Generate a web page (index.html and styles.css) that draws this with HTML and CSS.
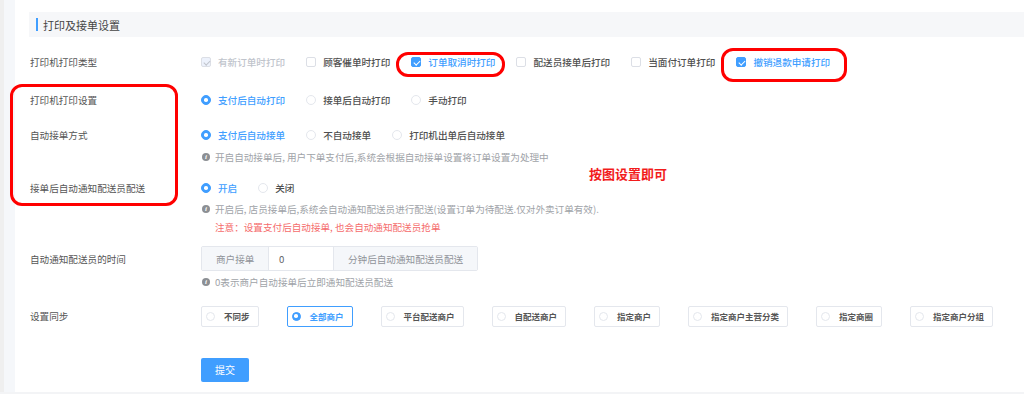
FILE: index.html
```html
<!DOCTYPE html>
<html lang="zh-CN">
<head>
<meta charset="utf-8">
<title>打印及接单设置</title>
<link rel="stylesheet" href="styles.css">
</head>
<body>
<div class="page">
  <div class="strip"></div>
  <div class="panel">
    <div class="section-title"><span class="bar"></span><span>打印及接单设置</span></div>
    <div class="form">
      <div class="row r1">
        <div class="label">打印机打印类型</div>
        <div class="ctrl">
          <span class="opt disabled"><span class="cb checked"></span>有新订单时打印</span>
          <span class="opt"><span class="cb"></span>顾客催单时打印</span>
          <span class="opt on"><span class="cb checked"></span>订单取消时打印</span>
          <span class="opt"><span class="cb"></span>配送员接单后打印</span>
          <span class="opt"><span class="cb"></span>当面付订单打印</span>
          <span class="opt on"><span class="cb checked"></span>撤销退款申请打印</span>
        </div>
      </div>
      <div class="row r2">
        <div class="label">打印机打印设置</div>
        <div class="ctrl">
          <span class="opt on"><span class="rd checked"></span>支付后自动打印</span>
          <span class="opt"><span class="rd"></span>接单后自动打印</span>
          <span class="opt"><span class="rd"></span>手动打印</span>
        </div>
      </div>
      <div class="row r3">
        <div class="label">自动接单方式</div>
        <div class="ctrl">
          <span class="opt on"><span class="rd checked"></span>支付后自动接单</span>
          <span class="opt"><span class="rd"></span>不自动接单</span>
          <span class="opt"><span class="rd"></span>打印机出单后自动接单</span>
        </div>
      </div>
      <div class="hint h1"><span class="info">i</span>开启自动接单后, 用户下单支付后,系统会根据自动接单设置将订单设置为处理中</div>
      <div class="row r4">
        <div class="label">接单后自动通知配送员配送</div>
        <div class="ctrl">
          <span class="opt on"><span class="rd checked"></span>开启</span>
          <span class="opt"><span class="rd"></span>关闭</span>
        </div>
      </div>
      <div class="hint h2"><span class="info">i</span>开启后, 店员接单后,系统会自动通知配送员进行配送(设置订单为待配送.仅对外卖订单有效).</div>
      <div class="note">注意：设置支付后自动接单, 也会自动通知配送员抢单</div>
      <div class="row r5">
        <div class="label">自动通知配送员的时间</div>
        <div class="ctrl">
          <div class="igroup">
            <span class="pre">商户接单</span>
            <span class="inp">0</span>
            <span class="app">分钟后自动通知配送员配送</span>
          </div>
        </div>
      </div>
      <div class="hint h3"><span class="info">i</span>0表示商户自动接单后立即通知配送员配送</div>
      <div class="row r6">
        <div class="label">设置同步</div>
        <div class="ctrl sync">
          <span class="sbox"><span class="rd"></span>不同步</span>
          <span class="sbox on"><span class="rd checked"></span>全部商户</span>
          <span class="sbox"><span class="rd"></span>平台配送商户</span>
          <span class="sbox"><span class="rd"></span>自配送商户</span>
          <span class="sbox"><span class="rd"></span>指定商户</span>
          <span class="sbox"><span class="rd"></span>指定商户主营分类</span>
          <span class="sbox"><span class="rd"></span>指定商圈</span>
          <span class="sbox"><span class="rd"></span>指定商户分组</span>
        </div>
      </div>
      <div class="actions"><button class="btn">提交</button></div>
    </div>
  </div>
  <div class="mark m1"></div>
  <div class="mark m2"></div>
  <div class="mark m3"></div>
  <div class="anno">按图设置即可</div>
</div>
</body>
</html>
```

FILE: styles.css
```css
* { box-sizing: border-box; }
html, body { margin: 0; padding: 0; }
body {
  width: 1024px;
  height: 394px;
  overflow: hidden;
  background: #f3f4f6;
  font-family: "Noto Sans CJK SC", "Noto Sans", "Liberation Sans", sans-serif;
  color: #606266;
}
.page {
  position: relative;
  display: flex;
  height: 394px;
}
.strip {
  width: 15px;
  height: 392px;
  background: linear-gradient(to right, #efefef 0, #efefef 4px, #f5f7fa 4px);
}
.panel {
  flex: 1;
  height: 392px;
  background: #fff;
  padding: 12px 0 0 14px;
}
.section-title {
  height: 25px;
  background: #f6f7f9;
  display: flex;
  align-items: center;
  padding-left: 7px;
  font-size: 11px;
  color: #454545;
}
.section-title .bar {
  width: 2px;
  height: 13px;
  background: #409eff;
  margin-right: 5px;
}
.form { padding-left: 1px; }
.row {
  display: flex;
  align-items: center;
  height: 20px;
}
.label {
  width: 171px;
  font-size: 9.6px;
  color: #555;
}
.ctrl {
  display: flex;
  align-items: center;
}
.opt {
  display: inline-flex;
  align-items: center;
  font-size: 9.6px;
  color: #4f4f4f;
  font-weight: 500;
  margin-right: 21px;
  white-space: nowrap;
}
.opt.on { color: #409eff; }
.opt.disabled { color: #c0c4cc; }
.cb {
  position: relative;
  width: 10px;
  height: 10px;
  border: 1px solid #dcdfe6;
  border-radius: 2px;
  background: #fff;
  margin-right: 7px;
  flex: none;
}
.cb.checked { background: #409eff; border-color: #409eff; }
.cb.checked::after {
  content: "";
  position: absolute;
  left: 2.6px;
  top: 0.6px;
  width: 2.5px;
  height: 5px;
  border: solid #fff;
  border-width: 0 1.2px 1.2px 0;
  transform: rotate(45deg);
}
.opt.disabled .cb.checked { background: #edf2fc; border-color: #dcdfe6; }
.opt.disabled .cb.checked::after { border-color: #c0c4cc; }
.rd {
  position: relative;
  width: 10px;
  height: 10px;
  border: 1px solid #e4e7ed;
  border-radius: 50%;
  background: #fff;
  margin-right: 7px;
  flex: none;
}
.rd.checked { background: #409eff; border-color: #409eff; }
.rd.checked::after {
  content: "";
  position: absolute;
  left: 50%;
  top: 50%;
  width: 3.5px;
  height: 3.5px;
  margin: -1.75px 0 0 -1.75px;
  border-radius: 50%;
  background: #fff;
}
.r1 { margin-top: 15px; }
.r2 { margin-top: 18px; }
.r3 { margin-top: 15px; }
.r4 { margin-top: 14px; }
.r5 { margin-top: 12px; height: 25px; }
.r6 { margin-top: 17px; }
.hint {
  margin-left: 171px;
  height: 14px;
  display: flex;
  align-items: center;
  font-size: 9.6px;
  color: #a0a3a8;
  white-space: nowrap;
}
.h1 { margin-top: 5px; }
.h2 { margin-top: 4px; }
.h3 { margin-top: 4px; }
.info {
  width: 8px;
  height: 8px;
  border-radius: 50%;
  background: #8c8f94;
  color: #fff;
  font-family: "Liberation Serif", serif;
  font-style: italic;
  font-weight: bold;
  font-size: 7px;
  line-height: 8px;
  text-align: center;
  margin: 0 5px 0 1px;
  flex: none;
}
.note {
  margin: 4px 0 0 185px;
  height: 14px;
  line-height: 14px;
  font-size: 9.6px;
  color: #f56c6c;
}
.igroup {
  display: flex;
  height: 25px;
  border: 1px solid #e4e7ed;
  border-radius: 2px;
  font-size: 9.6px;
  overflow: hidden;
}
.igroup span {
  display: flex;
  align-items: center;
  white-space: nowrap;
}
.pre, .app {
  background: #f5f7fa;
  color: #909399;
  padding: 0 13px 0 14px;
}
.pre { width: 67px; border-right: 1px solid #e4e7ed; }
.app { width: 144px; border-left: 1px solid #e4e7ed; }
.inp { width: 64px; padding-left: 10px; color: #606266; background: #fff; }
.sync { gap: 28px; }
.sbox {
  display: inline-flex;
  align-items: center;
  height: 21px;
  padding: 0 8px 0 4px;
  border: 1px solid #e4e7ed;
  border-radius: 2px;
  font-size: 8.5px;
  font-weight: bold;
  color: #555;
  white-space: nowrap;
}
.sbox .rd { width: 9px; height: 9px; margin-right: 9px; }
.sbox.on { border-color: #409eff; color: #409eff; }
.actions { margin: 29px 0 0 171px; }
.btn {
  width: 48px;
  height: 24px;
  border: 0;
  border-radius: 2px;
  background: #409eff;
  color: #fff;
  font-family: inherit;
  font-size: 10px;
  padding: 0;
}
.mark {
  position: absolute;
  border: 3px solid #f00;
  border-radius: 12px;
  pointer-events: none;
}
.m1 { left: 396px; top: 52px; width: 109px; height: 25px; }
.m2 { left: 721px; top: 48px; width: 126px; height: 34px; }
.m3 { left: 10px; top: 84px; width: 168px; height: 122px; }
.anno {
  position: absolute;
  left: 589px;
  top: 165px;
  font-size: 13px;
  font-weight: bold;
  color: #f21c1c;
  line-height: 18px;
}
```
